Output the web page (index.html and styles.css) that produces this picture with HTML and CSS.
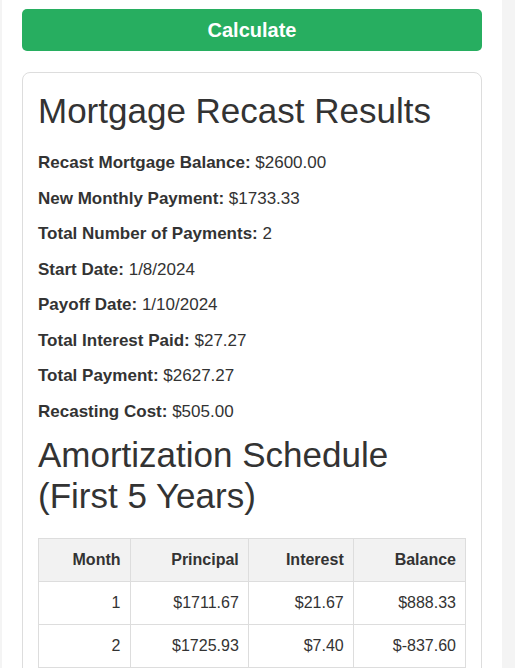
FILE: index.html
```html
<!DOCTYPE html>
<html lang="en">
<head>
    <meta charset="UTF-8">
    <meta name="viewport" content="width=device-width, initial-scale=1.0">
    <title>Mortgage Recast Calculator</title>
    <link rel="stylesheet" href="styles.css">
</head>
<body>

    <div class="container">
        <button class="calc-btn">Calculate</button>

        <!-- Results -->
        <div class="results">
            <h2>Mortgage Recast Results</h2>
            <p><strong>Recast Mortgage Balance:</strong> $2600.00</p>
            <p><strong>New Monthly Payment:</strong> $1733.33</p>
            <p><strong>Total Number of Payments:</strong> 2</p>
            <p><strong>Start Date:</strong> 1/8/2024</p>
            <p><strong>Payoff Date:</strong> 1/10/2024</p>
            <p><strong>Total Interest Paid:</strong> $27.27</p>
            <p><strong>Total Payment:</strong> $2627.27</p>
            <p><strong>Recasting Cost:</strong> $505.00</p>

            <h2 class="schedule-title">Amortization Schedule (First 5 Years)</h2>
            <table class="schedule">
                <thead>
                    <tr>
                        <th>Month</th>
                        <th>Principal</th>
                        <th>Interest</th>
                        <th>Balance</th>
                    </tr>
                </thead>
                <tbody>
                    <tr>
                        <td>1</td>
                        <td>$1711.67</td>
                        <td>$21.67</td>
                        <td>$888.33</td>
                    </tr>
                    <tr>
                        <td>2</td>
                        <td>$1725.93</td>
                        <td>$7.40</td>
                        <td>$-837.60</td>
                    </tr>
                </tbody>
            </table>
        </div>
    </div>

</body>
</html>
```

FILE: styles.css
```css
body {
    font-family: Arial, "Liberation Sans", sans-serif;
    background-color: #f4f4f4;
    color: #333;
    margin: 0;
    padding-left: 2px;
}

.container {
    width: 460px;
    background: #fff;
    padding: 9px 20px 20px;
}

.calc-btn {
    display: block;
    width: 100%;
    padding: 10px;
    border: none;
    border-radius: 5px;
    background-color: #27ae60;
    color: white;
    font-family: inherit;
    font-size: 20px;
    font-weight: bold;
    line-height: 22px;
    cursor: pointer;
}

/* Results card */
.results {
    margin-top: 21px;
    padding: 17px 15px 15px;
    border: 1px solid #ddd;
    border-radius: 8px;
}

.results h2 {
    font-size: 35px;
    font-weight: normal;
    line-height: 41px;
    margin: 0 0 22px;
}

.results h2.schedule-title {
    margin-top: -3px;
}

.results p {
    font-size: 17px;
    line-height: 20px;
    margin: 15.5px 0;
}

.schedule {
    width: 100%;
    border-collapse: collapse;
    font-size: 16px;
}

.schedule th,
.schedule td {
    border: 1px solid #ddd;
    padding: 12px 9px;
    line-height: 18px;
    text-align: right;
}

.schedule th {
    background-color: #f2f2f2;
}
```
